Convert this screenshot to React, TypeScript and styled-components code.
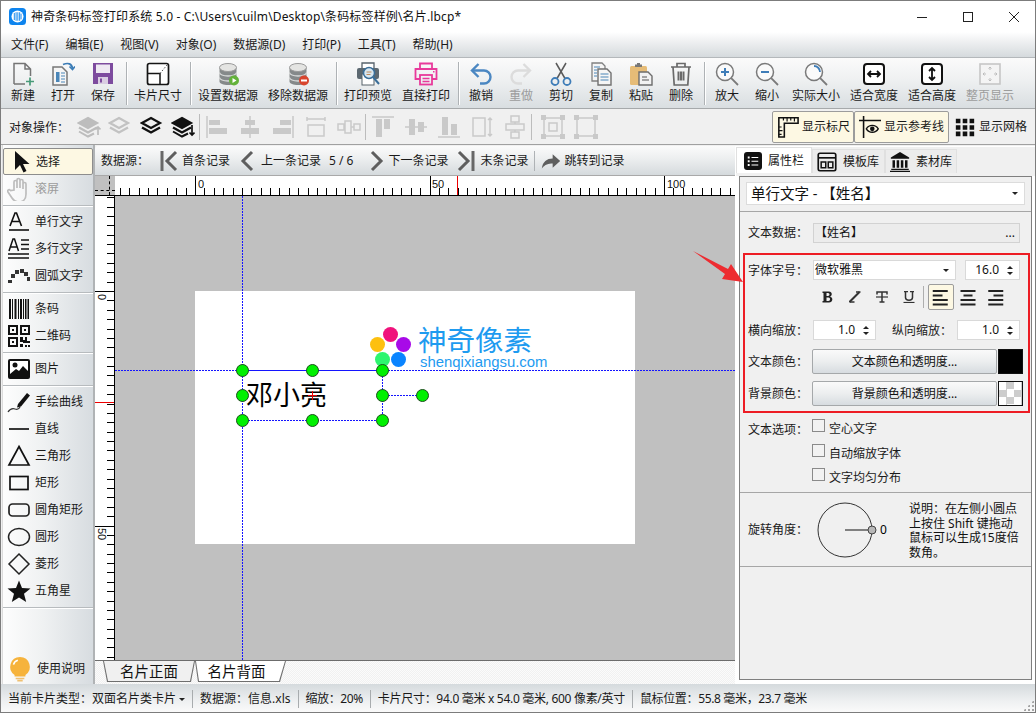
import React from 'react';
import styled, { createGlobalStyle } from 'styled-components';

const FONT = '"Noto Sans", "Noto Sans CJK SC", sans-serif';
const COLON = '\uFF1A';
const COMMA = '\uFF0C';

const GlobalStyle = createGlobalStyle`
  html, body { margin: 0; padding: 0; background: #f0f0f0; overflow: hidden; }
  * { box-sizing: border-box; }
  body { font-family: ${FONT}; font-size: 12px; color: #000; }
`;

const Glyph = styled.svg.attrs<{ $size?: number }>((p) => ({
  viewBox: p.viewBox || '0 0 24 24',
  fill: 'none',
}))<{ $size?: number }>`
  width: ${(p) => p.$size || 24}px;
  height: ${(p) => p.$size || 24}px;
  flex: none;
  display: block;
`;

const Window = styled.div`
  width: 1036px;
  height: 713px;
  border: 1px solid #7c7c7c;
  display: flex;
  flex-direction: column;
  position: relative;
  background: #f0f0f0;
  line-height: 1;
`;

const TitleBar = styled.div`
  height: 31px;
  background: #fff;
  display: flex;
  align-items: center;
  padding-left: 8px;
  flex: none;
`;

const TitleText = styled.span`
  margin-left: 5px;
  font-size: 12px;
  white-space: pre;
  color: #111;
  letter-spacing: 0.15px;
`;

const WinControls = styled.div`
  margin-left: auto;
  display: flex;
  align-items: center;
  padding-right: 15px;
  gap: 34px;
`;

const MenuBar = styled.div`
  height: 26px;
  flex: none;
  display: flex;
  align-items: center;
  padding-left: 10px;
  gap: 17px;
  background: linear-gradient(#ffffff, #f2f3f4 30%, #d5dadd);
  border-bottom: 1px solid #b4b8bb;
`;

const MenuItem = styled.span`
  font-size: 12px;
  color: #1a1a1a;
`;

const Toolbar = styled.div`
  height: 51px;
  flex: none;
  display: flex;
  padding-left: 2px;
  background: linear-gradient(#fbfbfb, #eef0f1 45%, #d9dee1);
  border-bottom: 1px solid #a6a9ab;
`;

const ToolButton = styled.div<{ $w: number; $off?: boolean }>`
  width: ${(p) => p.$w}px;
  display: flex;
  flex-direction: column;
  align-items: center;
  padding-top: 4px;
  gap: 4px;
  font-size: 12px;
  color: ${(p) => (p.$off ? '#9c9c9c' : '#1a1a1a')};
  white-space: nowrap;
`;

const ToolSep = styled.div`
  width: 6px;
  flex: none;
  display: flex;
  justify-content: center;
  padding: 4px 0 3px;
  &::before {
    content: '';
    width: 1px;
    background: #aeb2b5;
    box-shadow: 1px 0 0 #fff;
  }
`;

const ObjectBar = styled.div`
  height: 36px;
  flex: none;
  display: flex;
  align-items: center;
  padding: 1px 0 0 8px;
  background: #f0f0f0;
  border-bottom: 1px solid #a0a0a0;
`;

const ObjectLabel = styled.span`
  width: 64px;
  padding-top: 1px;
  flex: none;
  font-size: 12px;
  color: #1a1a1a;
`;

const ObjectIconSlot = styled.div<{ $w?: number; $ml?: number }>`
  width: ${(p) => p.$w || 33}px;
  margin-left: ${(p) => p.$ml || 0}px;
  display: flex;
  justify-content: center;
  flex: none;
`;

const ObjectSep = styled.div`
  width: 1px;
  height: 26px;
  background: #bcbcbc;
  flex: none;
`;

const ToggleGroup = styled.div`
  margin-left: auto;
  display: flex;
  align-items: center;
  padding-right: 7px;
`;

const Toggle = styled.div<{ $w: number; $on?: boolean }>`
  width: ${(p) => p.$w}px;
  height: 32px;
  display: flex;
  align-items: center;
  gap: 3px;
  padding-left: 4px;
  font-size: 12px;
  color: #1a1a1a;
  white-space: nowrap;
  background: ${(p) => (p.$on ? '#fdf8e3' : 'transparent')};
  border: 1px solid ${(p) => (p.$on ? '#9c9c9c' : 'transparent')};
  border-radius: 2px;
`;

const Body = styled.div`
  flex: 1;
  min-height: 0;
  display: flex;
`;

const Sidebar = styled.div`
  width: 93px;
  flex: none;
  margin-left: 1px;
  padding: 3px 0 2px;
  display: flex;
  flex-direction: column;
  background: linear-gradient(90deg, #fdfdfd, #eff1f2 45%, #d7dce0);
  border-right: 2px solid #b0b3b5;
  border-left: 1px solid #dcdcdc;
`;

const SideItem = styled.div<{ $active?: boolean; $off?: boolean }>`
  height: 27px;
  flex: none;
  display: flex;
  align-items: center;
  gap: 4px;
  padding-left: 4px;
  font-size: 12px;
  white-space: nowrap;
  color: ${(p) => (p.$off ? '#9c9c9c' : '#1a1a1a')};
  background: ${(p) => (p.$active ? '#fdf8e3' : 'transparent')};
  border: ${(p) => (p.$active ? '1px solid #8d8d8d' : 'none')};
  border-radius: ${(p) => (p.$active ? '2px' : '0')};
`;

const SideSep = styled.div`
  height: 1px;
  flex: none;
  margin: 3px 0 2px;
  background: #b7bbbe;
  box-shadow: 0 1px 0 #fff;
`;

const SideSpacer = styled.div`
  flex: 1;
`;

const Center = styled.div`
  width: 640px;
  flex: none;
  display: flex;
  flex-direction: column;
  padding-top: 1px;
`;

const DataBar = styled.div`
  height: 30px;
  flex: none;
  display: flex;
  align-items: center;
  padding: 1px 0 0 6px;
  font-size: 12px;
  color: #1a1a1a;
  white-space: nowrap;
  border-radius: 3px 0 0 0;
  border-bottom: 1px solid #a9a9a9;
  background: linear-gradient(#fbfbfb, #eceeef 45%, #d5dadd);
`;

const DataLabel = styled.span`
  width: 59px;
  flex: none;
`;

const DataItem = styled.div<{ $ml?: number; $gap?: number }>`
  display: flex;
  align-items: center;
  margin-left: ${(p) => p.$ml || 0}px;
  gap: ${(p) => p.$gap || 4}px;
`;

const DataSep = styled.div`
  width: 1px;
  height: 20px;
  background: #aeb2b5;
  margin: 0 6px 0 5px;
`;

const NavSvg = styled.svg<{ $w: number }>`
  width: ${(p) => p.$w}px;
  height: 22px;
  flex: none;
  display: block;
`;

const Workspace = styled.div`
  flex: 1;
  min-height: 0;
  display: grid;
  grid-template-columns: 20px 620px;
  grid-template-rows: 20px 464px;
`;

const RulerCorner = styled.div`
  background: #c0c0c0;
  position: relative;
  border-bottom: 1px solid #000;
  &::before {
    content: '';
    position: absolute;
    left: 14px;
    top: 0;
    height: 100%;
    border-left: 1px dashed #000;
  }
  &::after {
    content: '';
    position: absolute;
    left: 0;
    right: 0;
    top: 14px;
    border-top: 1px dashed #000;
  }
`;

const RulerSvg = styled.svg`
  display: block;
  background: #fff;
`;

const RulerText = styled.text`
  font-family: "Liberation Sans", sans-serif;
  font-size: 11px;
  fill: #111;
`;

const Canvas = styled.div`
  position: relative;
  background: #c0c0c0;
  overflow: hidden;
`;

const Card = styled.div`
  position: absolute;
  left: 80px;
  top: 95px;
  width: 440px;
  height: 253px;
  background: #fff;
`;

const GuideV = styled.div`
  position: absolute;
  left: 127px;
  top: 0;
  bottom: 0;
  width: 1px;
  background: repeating-linear-gradient(#1414ff 0 2px, transparent 2px 3px);
`;

const GuideH = styled.div`
  position: absolute;
  left: 0;
  right: 0;
  top: 174px;
  height: 1px;
  background: repeating-linear-gradient(90deg, #1414ff 0 2px, transparent 2px 3px);
`;

const LogoTitle = styled.div`
  position: absolute;
  left: 303px;
  top: 129px;
  height: 30px;
  font-size: 28.5px;
  color: #1e9bf0;
  white-space: nowrap;
  line-height: 30px;
`;

const LogoSub = styled.div`
  position: absolute;
  left: 305px;
  top: 159px;
  font-family: "Liberation Sans", sans-serif;
  font-size: 14.9px;
  color: #1e9bf0;
  white-space: nowrap;
  line-height: 14px;
`;

const LogoDot = styled.div<{ $x: number; $y: number; $c: string }>`
  position: absolute;
  left: ${(p) => p.$x - 115 - 7.5}px;
  top: ${(p) => p.$y - 196 - 7.5}px;
  width: 15px;
  height: 15px;
  border-radius: 50%;
  background: ${(p) => p.$c};
`;

const NameText = styled.div`
  position: absolute;
  left: 131px;
  top: 180px;
  font-size: 27px;
  line-height: 38px;
  color: #000;
  white-space: nowrap;
`;

const SelectLine = styled.div<{ $x: number; $y: number; $w?: number; $h?: number; $solid?: boolean }>`
  position: absolute;
  left: ${(p) => p.$x - 115}px;
  top: ${(p) => p.$y - 196}px;
  width: ${(p) => p.$w || 1}px;
  height: ${(p) => p.$h || 1}px;
  background: ${(p) =>
    p.$solid
      ? '#1414ff'
      : `repeating-linear-gradient(${p.$h ? '180deg' : '90deg'}, #1414ff 0 2px, transparent 2px 3px)`};
`;

const Handle = styled.div<{ $x: number; $y: number }>`
  position: absolute;
  left: ${(p) => p.$x - 115 - 6.5}px;
  top: ${(p) => p.$y - 196 - 6.5}px;
  width: 13px;
  height: 13px;
  border-radius: 50%;
  background: #00f000;
  border: 1px solid #1d4d1d;
`;

const CrossMark = styled.div`
  position: absolute;
  left: 193px;
  top: 195px;
  width: 9px;
  height: 9px;
  background:
    linear-gradient(#e00, #e00) center / 1px 100% no-repeat,
    linear-gradient(#e00, #e00) center / 100% 1px no-repeat;
`;

const SheetTabs = styled.div`
  height: 24px;
  flex: none;
  display: flex;
  padding-left: 8px;
  border-top: 1px solid #6c6c6c;
  background: repeating-conic-gradient(#f1f1f1 0 25%, #fbfbfb 0 50%) 0 0 / 2px 2px;
`;

const SheetTab = styled.div<{ $active?: boolean; $w: number }>`
  width: ${(p) => p.$w}px;
  height: 21px;
  background: #6f6f6f;
  clip-path: ${(p) =>
    p.$active
      ? 'polygon(0 0, 100% 0, calc(100% - 4px) 100%, 4px 100%)'
      : 'polygon(0 0, 100% 0, calc(100% - 6px) 100%, 3px 100%)'};
  & > span {
    display: flex;
    align-items: center;
    justify-content: center;
    width: 100%;
    height: 100%;
    padding-right: ${(p) => (p.$active ? 0 : 8)}px;
    font-size: 14.5px;
    color: #111;
    background: ${(p) => (p.$active ? '#f0f0f0' : '#fff')};
    clip-path: ${(p) =>
      p.$active
        ? 'polygon(1px 0, calc(100% - 1px) 0, calc(100% - 5px) calc(100% - 1px), 5px calc(100% - 1px))'
        : 'polygon(1px 0, calc(100% - 1px) 0, calc(100% - 7px) calc(100% - 1px), 4px calc(100% - 1px))'};
  }
`;

const Panel = styled.div`
  flex: 1;
  min-width: 0;
  display: flex;
  flex-direction: column;
  padding: 1px 3px 4px 4px;
  background: #fff;
  border-top: 1px solid #f0f0f0;
`;

const PanelTabs = styled.div`
  height: 29px;
  flex: none;
  display: flex;
  align-items: flex-end;
  margin: 0 -3px 0 -3px;
  padding-bottom: 3px;
  background: #f0f0f0;
`;

const PanelTab = styled.div<{ $active?: boolean; $w: number }>`
  width: ${(p) => p.$w}px;
  height: ${(p) => (p.$active ? 26 : 24)}px;
  display: flex;
  align-items: center;
  gap: 6px;
  padding-left: ${(p) => (p.$active ? 7 : 4)}px;
  font-size: 12px;
  color: #1a1a1a;
  background: ${(p) => (p.$active ? '#fff' : '#ececec')};
  border: 1px solid #e0e0e0;
  border-bottom: none;
  white-space: nowrap;
`;

const Frame = styled.div`
  flex: 1;
  min-height: 0;
  display: flex;
  flex-direction: column;
  background: #f0f0f0;
  border: 1px solid #7f7f7f;
`;

const TypeSelect = styled.div`
  height: 23px;
  margin: 5px 6px 6px;
  flex: none;
  background: #fff;
  border: 1px solid #dcdcdc;
  display: flex;
  align-items: center;
  padding-left: 4px;
  font-size: 14.5px;
  color: #111;
  white-space: nowrap;
`;

const Caret = styled.span`
  margin-left: auto;
  margin-right: 6px;
  width: 0;
  height: 0;
  border-left: 3px solid transparent;
  border-right: 3px solid transparent;
  border-top: 3px solid #222;
`;

const Divider = styled.div`
  height: 1px;
  flex: none;
  background: #a6a6a6;
`;

const DataRow = styled.div`
  height: 41px;
  flex: none;
  display: flex;
  align-items: center;
  padding-left: 8px;
`;

const FieldLabel = styled.span<{ $w?: number; $ml?: number }>`
  width: ${(p) => p.$w || 65}px;
  margin-left: ${(p) => p.$ml || 0}px;
  padding-top: 1px;
  flex: none;
  font-size: 12px;
  color: #1a1a1a;
  white-space: nowrap;
`;

const DataField = styled.div`
  width: 207px;
  height: 20px;
  background: #ececec;
  border: 1px solid #d2d2d2;
  display: flex;
  align-items: center;
  font-size: 12px;
  color: #111;
  justify-content: space-between;
  padding: 0 4px 0 1px;
`;

const RedBox = styled.div`
  width: 287px;
  height: 160px;
  flex: none;
  margin-left: 3px;
  border: 2px solid #ed1c24;
  padding: 5px 0 0 3px;
  display: flex;
  flex-direction: column;
`;

const FormRow = styled.div<{ $h: number; $mb?: number }>`
  height: ${(p) => p.$h}px;
  margin-bottom: ${(p) => p.$mb || 0}px;
  flex: none;
  display: flex;
  align-items: center;
`;

const WhiteBox = styled.div<{ $w: number; $ml?: number }>`
  width: ${(p) => p.$w}px;
  height: 20px;
  margin-left: ${(p) => p.$ml || 0}px;
  padding-left: 1px;
  flex: none;
  background: #fff;
  border: 1px solid #d9d9d9;
  display: flex;
  align-items: center;
  font-size: 12px;
  color: #111;
`;

const SpinValue = styled.span`
  margin-left: auto;
  font-size: 12px;
`;

const SpinArrows = styled.span`
  display: flex;
  flex-direction: column;
  gap: 3px;
  margin: 0 6px 0 8px;
  &::before, &::after {
    content: '';
    width: 0;
    height: 0;
    border-left: 3px solid transparent;
    border-right: 3px solid transparent;
  }
  &::before { border-bottom: 3px solid #222; }
  &::after { border-top: 3px solid #222; }
`;

const FormatRow = styled.div`
  height: 26px;
  margin: 4px 0 10px 67px;
  flex: none;
  display: flex;
  align-items: center;
`;

const FormatBtn = styled.div<{ $on?: boolean; $w?: number }>`
  width: ${(p) => p.$w || 26}px;
  height: 26px;
  margin-right: 1px;
  display: flex;
  align-items: center;
  justify-content: center;
  flex: none;
  background: ${(p) => (p.$on ? '#fdf8e3' : 'transparent')};
  border: 1px solid ${(p) => (p.$on ? '#9c9c9c' : 'transparent')};
  border-radius: 2px;
`;

const FormatSep = styled.div`
  width: 1px;
  height: 22px;
  background: #aeaeae;
  margin: 0 4px 0 0;
`;

const ColorButton = styled.div`
  width: 185px;
  height: 25px;
  margin-left: -1px;
  flex: none;
  display: flex;
  align-items: center;
  justify-content: center;
  font-size: 12px;
  color: #111;
  border: 1px solid #a5a8aa;
  border-radius: 2px;
  background: linear-gradient(#fafafa, #eceeef 50%, #d7dce0);
`;

const Swatch = styled.div<{ $check?: boolean }>`
  width: 25px;
  height: 25px;
  margin-left: 1px;
  flex: none;
  border: 1px solid #111;
  background: ${(p) =>
    p.$check
      ? 'repeating-conic-gradient(#cdcdcd 0 25%, #fff 0 50%) 0 0 / 15px 15px'
      : '#000'};
`;

const OptionSection = styled.div`
  height: 79px;
  flex: none;
  padding: 4px 0 0 8px;
`;

const OptionRow = styled.div`
  height: 24.5px;
  display: flex;
  align-items: center;
  font-size: 12px;
  color: #1a1a1a;
`;

const CheckBox = styled.span`
  width: 13px;
  height: 13px;
  flex: none;
  margin: -7px 4px 0 -1px;
  border: 1px solid #8a8a8a;
  background: #f2f2f2;
`;

const RotateSection = styled.div`
  height: 73px;
  flex: none;
  display: flex;
  align-items: center;
  padding-left: 8px;
`;

const DialSvg = styled.svg`
  width: 60px;
  height: 60px;
  flex: none;
`;

const DialValue = styled.span`
  font-size: 12px;
  margin-left: 3px;
  width: 29px;
`;

const Note = styled.div`
  padding-top: 3px;
  font-size: 12px;
  line-height: 14.5px;
  color: #111;
  white-space: nowrap;
`;

const StatusBar = styled.div`
  height: 28px;
  flex: none;
  display: flex;
  align-items: center;
  padding: 2px 0 0 7px;
  font-size: 12px;
  color: #1a1a1a;
  white-space: nowrap;
  background: linear-gradient(#d5dadd, #eef0f1 60%, #fafafa);
  position: relative;
`;

const StatusText = styled.span<{ $tight?: number }>`
  letter-spacing: ${(p) => p.$tight || 0}px;
`;

const StatusSep = styled.div`
  width: 1px;
  height: 18px;
  background: #a8acae;
  margin: 0 7px;
  flex: none;
`;

const StatusCaret = styled.span`
  display: inline-block;
  margin-left: 3px;
  vertical-align: middle;
  border-left: 3px solid transparent;
  border-right: 3px solid transparent;
  border-top: 3px solid #222;
`;

const Grip = styled.div`
  position: absolute;
  right: 1px;
  bottom: 1px;
  width: 11px;
  height: 11px;
  background: radial-gradient(circle, #a5a5a5 0 1px, transparent 1px) 0 0 / 4px 4px;
  clip-path: polygon(100% 0, 100% 100%, 0 100%);
`;

const Callout = styled.svg`
  position: absolute;
  left: 685px;
  top: 244px;
  width: 62px;
  height: 42px;
`;

const AppIcon = () => (
  <Glyph $size={17}>
    <rect x="0" y="0" width="24" height="24" rx="5" fill="#0d84ee" />
    <circle cx="12" cy="12" r="8.5" fill="#fff" />
    <path d="M7.5 7v10M10 6v12M12.5 6v12M15 6v12M17 8v8" stroke="#0d84ee" strokeWidth="1.3" />
  </Glyph>
);

const NewIcon = () => (
  <Glyph>
    <path d="M3 22V1.5h11l5.5 5.5v7M3 22h11M14 1.5V7h5.5" stroke="#757575" strokeWidth="1.5" />
    <path d="M19 15.5v8M15 19.5h8" stroke="#479a78" strokeWidth="1.7" />
  </Glyph>
);

const OpenIcon = () => (
  <Glyph>
    <path d="M2 5h9l5 5v13H2z" fill="#f5f5f5" stroke="#777" strokeWidth="1.5" />
    <rect x="5" y="10" width="3.5" height="10" fill="#4a86b8" />
    <path d="M10 11h4M10 14h4M10 17h4M10 20h4" stroke="#4a86b8" />
    <path d="M12 2.5c5-2 9-1 9.5 4" stroke="#3b7cb6" strokeWidth="1.7" />
    <path d="M18.5 4.5l3 3 2.5-3" stroke="#3b7cb6" strokeWidth="1.7" />
  </Glyph>
);

const SaveIcon = () => (
  <Glyph>
    <rect x="2" y="1" width="20" height="21" fill="#7d4b9e" />
    <rect x="5" y="2.5" width="14" height="8.5" fill="#eee9f2" />
    <rect x="7" y="15" width="10" height="7" fill="#d9cde2" />
    <rect x="9" y="16.5" width="2" height="4" fill="#7d4b9e" />
  </Glyph>
);

const CardSizeIcon = () => (
  <Glyph>
    <rect x="1.5" y="1.5" width="21" height="21" rx="2" fill="#fff" stroke="#151515" strokeWidth="1.7" />
    <path d="M2 11.5h12V22" stroke="#151515" strokeWidth="1.5" />
    <path d="M14 11.5L21 3" stroke="#444" strokeDasharray="1.5 1.8" />
  </Glyph>
);

const DbIcon = ({ remove }: { remove?: boolean }) => (
  <Glyph>
    <path d="M3.5 5.5v14c0 2 3.8 3.5 8.5 3.5s8.5-1.5 8.5-3.5v-14z" fill="#85898a" />
    <path d="M3.5 10.5c0 2 3.8 3.5 8.5 3.5s8.5-1.5 8.5-3.5M3.5 15.5c0 2 3.8 3.5 8.5 3.5s8.5-1.5 8.5-3.5" stroke="#d9dbdb" strokeWidth="1.3" />
    <ellipse cx="12" cy="5.5" rx="8.5" ry="4" fill="#e4e4e2" stroke="#9a9a9a" />
    <circle cx="18" cy="18.5" r="5" fill={remove ? '#d8452e' : '#62b23a'} />
    {remove ? (
      <rect x="15" y="17.5" width="6" height="2" fill="#fff" />
    ) : (
      <path d="M16.5 16l4 2.5-4 2.5z" fill="#fff" />
    )}
  </Glyph>
);

const PreviewIcon = () => (
  <Glyph>
    <path d="M6 1h12v6H6z" fill="#fff" stroke="#56626b" strokeWidth="1.3" />
    <rect x="1" y="6" width="22" height="11" rx="2" fill="#5c6871" />
    <rect x="6" y="12" width="12" height="11" fill="#fff" stroke="#56626b" />
    <circle cx="13" cy="11" r="5.5" fill="#d7e7f1" stroke="#3a6e99" strokeWidth="1.5" />
    <path d="M17 15l6 7" stroke="#3a6e99" strokeWidth="2" />
    <path d="M10.5 10h5M10.5 12.5h4" stroke="#c08a5a" />
  </Glyph>
);

const PrintIcon = () => (
  <Glyph>
    <path d="M6 7V1.5h12V7M6 17H1.5V7h21v10H18" stroke="#e83a9b" strokeWidth="1.8" />
    <rect x="6" y="13" width="12" height="9.5" stroke="#e83a9b" strokeWidth="1.8" />
    <path d="M8.5 16.5h7M8.5 19.5h7" stroke="#e83a9b" strokeWidth="1.3" />
    <path d="M19 9.8h1.5" stroke="#e83a9b" strokeWidth="1.5" />
  </Glyph>
);

const UndoIcon = () => (
  <Glyph>
    <path d="M9.5 2L3 8.5l6.5 6.5" stroke="#4b87c2" strokeWidth="2.4" />
    <path d="M3.5 8.5H15a6.5 6.5 0 0 1 0 13h-4" stroke="#4b87c2" strokeWidth="2.4" />
  </Glyph>
);

const RedoIcon = () => (
  <Glyph>
    <path d="M14.5 2L21 8.5 14.5 15" stroke="#dcdcdc" strokeWidth="2.4" />
    <path d="M20.5 8.5H9a6.5 6.5 0 0 0 0 13h4" stroke="#dcdcdc" strokeWidth="2.4" />
  </Glyph>
);

const CutIcon = () => (
  <Glyph>
    <path d="M8 16.5L17 1M16 16.5L7 1" stroke="#5a5a5a" strokeWidth="1.5" />
    <circle cx="6" cy="19.5" r="3.5" stroke="#3f7db8" strokeWidth="1.8" />
    <circle cx="18" cy="19.5" r="3.5" stroke="#3f7db8" strokeWidth="1.8" />
  </Glyph>
);

const CopyIcon = () => (
  <Glyph>
    <path d="M3 1h10l3 3v15H3z" fill="#f5f5f5" stroke="#808080" strokeWidth="1.3" />
    <path d="M5 5h6M5 8h3M5 11h3M5 14h3" stroke="#4a86b8" />
    <path d="M9 7h9l4 4v12H9z" fill="#f5f5f5" stroke="#707070" strokeWidth="1.4" />
    <path d="M11.5 12h8M11.5 15h8M11.5 18h8" stroke="#4a86b8" strokeWidth="1.2" />
  </Glyph>
);

const PasteIcon = () => (
  <Glyph>
    <rect x="1" y="4" width="17" height="19" rx="1.5" fill="#e6bc77" />
    <path d="M6 5V2.5h2V1h3v1.5h2V5z" fill="#777" />
    <path d="M10 10h9l4 4v9H10z" fill="#f2f2f2" stroke="#6d6d6d" strokeWidth="1.4" />
    <path d="M13 15h5M13 18h7" stroke="#555" />
  </Glyph>
);

const TrashIcon = () => (
  <Glyph>
    <path d="M2 5h20M8 5V1.5h8V5M4 5l1.2 18h13.6L20 5" stroke="#6a6a6a" strokeWidth="1.7" />
    <path d="M8.5 9.5h2v9h-2zM11 9.5h2v9h-2zM13.5 9.5h2v9h-2z" fill="#6a6a6a" />
  </Glyph>
);

const ZoomIcon = ({ mode }: { mode: 'in' | 'out' | 'actual' }) => (
  <Glyph>
    <circle cx="10" cy="10" r="8.5" fill="#fafafa" stroke="#7a7a7a" strokeWidth="1.5" />
    <path d="M16.2 16.2L23 23" stroke="#7a7a7a" strokeWidth="1.8" />
    {mode === 'actual' ? (
      <path d="M10 4a6 6 0 0 1 6 6" stroke="#3f7db8" strokeWidth="1.8" />
    ) : (
      <path d={mode === 'in' ? 'M6 10h8M10 6v8' : 'M6 10h8'} stroke="#3f7db8" strokeWidth="2" />
    )}
  </Glyph>
);

const FitIcon = ({ vertical }: { vertical?: boolean }) => (
  <Glyph>
    <rect x="2" y="2" width="20" height="20" rx="3" fill="#fff" stroke="#111" strokeWidth="2" />
    <path
      d={vertical ? 'M12 6v12M9 9l3-3 3 3M9 15l3 3 3-3' : 'M6 12h12M9 9l-3 3 3 3M15 9l3 3-3 3'}
      stroke="#111"
      strokeWidth="1.8"
    />
  </Glyph>
);

const FitPageIcon = () => (
  <Glyph>
    <rect x="2" y="2" width="20" height="20" fill="#f4f4f4" stroke="#c6c6c6" strokeWidth="1.6" />
    <path d="M12 5v3M10.5 6.5L12 5l1.5 1.5M12 19v-3M10.5 17.5L12 19l1.5-1.5M5 12h3M6.5 10.5L5 12l1.5 1.5M19 12h-3M17.5 10.5L19 12l-1.5 1.5" stroke="#bdbdbd" />
  </Glyph>
);

const LayerIcon = ({ color, arrow }: { color: string; arrow?: 'up' | 'down' }) => (
  <Glyph>
    <path d="M11 3l9 5-9 5-9-5z" stroke={color} strokeWidth="2.2" fill={arrow ? color : 'none'} />
    <path d="M2 12.5l9 5 9-5" stroke={color} strokeWidth="2.4" />
    {arrow && <path d="M2 16.5l9 5 6-3" stroke={color} strokeWidth="2" />}
    {arrow === 'up' && <path d="M21 20v-8M18.5 14.5L21 12l2.5 2.5" stroke={color} strokeWidth="1.7" />}
    {arrow === 'down' && <path d="M21 10v10M18.5 17.5L21 20l2.5-2.5" stroke={color} strokeWidth="1.7" />}
  </Glyph>
);

const ALIGN = '#c9c9c9';

const AlignIcon = ({ d, fill }: { d: string; fill: string }) => (
  <Glyph>
    <path d={d} stroke={ALIGN} strokeWidth="1.5" />
    <path d={fill} fill={ALIGN} />
  </Glyph>
);

const alignShapes = [
  { d: 'M2 1v22', fill: 'M4 5h11v5H4zM4 13h18v6H4z' },
  { d: 'M12 1v22', fill: 'M7 5h10v5H7zM3 13h18v6H3z' },
  { d: 'M22 1v22', fill: 'M9 5h11v5H9zM2 13h18v6H2z' },
  { d: 'M3 4h18M3 2v4M21 2v4M4 10h16v11H4z', fill: '' },
  { d: 'M1 9h6v6H1zM8 6h6v12H8zM17 9h6v6h-6zM7 12h1M14 12h3', fill: '' },
];

const alignShapes2 = [
  { d: 'M1 2h22', fill: 'M5 4h6v18H5zM13 4h6v10h-6z' },
  { d: 'M1 12h22', fill: 'M5 4h6v16H5zM14 7h6v10h-6z' },
  { d: 'M1 22h22', fill: 'M5 2h6v18H5zM14 9h6v11h-6z' },
  { d: 'M3 3h12v18H3zM20 3v18M18 5l2-2 2 2M18 19l2 2 2-2', fill: '' },
  { d: 'M8 1h8v6H8zM3 9h18v6H3zM8 17h8v6H8zM12 7v2M12 15v2', fill: '' },
];

const SnapIcon = ({ inner }: { inner?: boolean }) => (
  <Glyph>
    <path d="M3 3h18v18H3z" stroke={ALIGN} strokeWidth="1.5" />
    <path d="M0 0h5v5H0zM19 0h5v5h-5zM0 19h5v5H0zM19 19h5v5h-5z" fill={ALIGN} />
    {inner && <path d="M8 8h8v8H8z" stroke={ALIGN} strokeWidth="1.5" />}
  </Glyph>
);

const RulerToggleIcon = () => (
  <Glyph $size={22}>
    <path d="M2 2h21v6H8v15H2z" stroke="#111" strokeWidth="1.7" />
    <path d="M7 2v3M11 2v4M15 2v3M19 2v4M2 12h3M2 16h4M2 20h3" stroke="#111" strokeWidth="1.3" />
  </Glyph>
);

const GuideToggleIcon = () => (
  <Glyph $size={22}>
    <path d="M5 0v24M0 5h24" stroke="#111" strokeWidth="1.7" />
    <path d="M8 14c3-5 10-5 13 0-3 5-10 5-13 0z" stroke="#111" strokeWidth="1.5" />
    <circle cx="14.5" cy="14" r="2.5" fill="#111" />
  </Glyph>
);

const GridIcon = () => (
  <Glyph $size={22}>
    <path d="M2 3h5v5H2zM9.5 3h5v5h-5zM17 3h5v5h-5zM2 10h5v5H2zM9.5 10h5v5h-5zM17 10h5v5h-5zM2 17h5v5H2zM9.5 17h5v5h-5zM17 17h5v5h-5z" fill="#111" />
  </Glyph>
);

const ArrowIcon = () => (
  <Glyph>
    <path d="M7 1v19l5-5 3.5 7.5 3-1.5L15 14h6.5z" fill="#111" />
  </Glyph>
);

const HandIcon = () => (
  <Glyph>
    <path d="M7 13V5a1.5 1.5 0 0 1 3 0v6-8a1.5 1.5 0 0 1 3 0v8-7a1.5 1.5 0 0 1 3 0v8-5a1.5 1.5 0 0 1 3 0v10c0 5-3 8-7 8-3 0-5-1-7-4l-4-6c-1-2 1-3 2.5-1.5z" stroke="#bdbdbd" strokeWidth="1.7" />
  </Glyph>
);

const SingleTextIcon = () => (
  <Glyph>
    <path d="M3 16L8 3h1.5l5 13M5 11.5h7.5" stroke="#111" strokeWidth="1.6" />
    <path d="M2 20h20" stroke="#111" strokeWidth="1.6" />
  </Glyph>
);

const MultiTextIcon = () => (
  <Glyph>
    <path d="M2 14L6 2h1.5l4 12M3.5 10h6.5" stroke="#111" strokeWidth="1.5" />
    <path d="M14 3h8M14 7.5h8M14 12h8M1 17h21M1 21h21" stroke="#111" strokeWidth="1.5" />
  </Glyph>
);

const ArcTextIcon = () => (
  <Glyph>
    <path d="M1 19h4v-3H1zM4 14h4v-4H4zM8 10h4V6H8zM13 9h4V5h-4zM17 12h4V8h-4zM20 17h3v-4h-3z" fill="#333" />
  </Glyph>
);

const BarcodeIcon = () => (
  <Glyph>
    <path d="M2 2h2v20H2zM5 2h1v20H5zM7.5 2h2v20h-2zM11 2h1v20h-1zM13 2h2v20h-2zM16 2h1v20h-1zM18 2h1.5v20H18zM20.5 2H22v20h-1.5z" fill="#111" />
  </Glyph>
);

const QrIcon = () => (
  <Glyph>
    <path fillRule="evenodd" d="M1 1h10v10H1zM3 3v6h6V3zM5 5h2v2H5zM13 1h10v10H13zM15 3v6h6V3zM17 5h2v2h-2zM1 13h10v10H1zM3 15v6h6v-6zM5 17h2v2H5zM13 13h3v3h2v-3h2v4h3v2h-7v-1h-3zM13 20h3v3h-3zM18 21h2v2h-2zM21 21h2v2h-2z" fill="#111" />
  </Glyph>
);

const PictureIcon = () => (
  <Glyph>
    <rect x="1" y="2" width="22" height="20" rx="2" fill="#111" />
    <rect x="3" y="4" width="18" height="13" fill="#fff" />
    <circle cx="8" cy="8" r="2.5" fill="#111" />
    <path d="M3 17l6-5 3 2 4-5 5 5v3z" fill="#111" />
  </Glyph>
);

const PenIcon = () => (
  <Glyph>
    <path d="M11 14l9-11 3 2.5-9 11-4 1z" fill="#111" />
    <path d="M1 22c2-3 4-4 7-3s4 0 5-2" stroke="#333" strokeWidth="1.3" />
  </Glyph>
);

const LineIcon = () => (
  <Glyph>
    <path d="M2 12h20" stroke="#222" strokeWidth="1.8" />
  </Glyph>
);

const ShapeIcon = ({ kind }: { kind: 'tri' | 'rect' | 'round' | 'oval' | 'diamond' }) => (
  <Glyph>
    {kind === 'tri' && <path d="M12 2.5L22 21H2z" stroke="#111" strokeWidth="1.7" />}
    {kind === 'rect' && <rect x="3" y="5.5" width="18" height="13" stroke="#111" strokeWidth="1.7" />}
    {kind === 'round' && <rect x="2" y="6" width="20" height="12" rx="3.5" stroke="#222" strokeWidth="1.7" />}
    {kind === 'oval' && <ellipse cx="12" cy="12" rx="10.5" ry="8.5" stroke="#222" strokeWidth="1.5" />}
    {kind === 'diamond' && <path d="M12 2l10 10-10 10L2 12z" stroke="#222" strokeWidth="1.5" />}
  </Glyph>
);

const StarIcon = () => (
  <Glyph>
    <path d="M12 1.5l3 7.5 8.5.6-6.5 5.2 2.2 8.2L12 18.5 4.8 23 7 14.800.5 9.600 9 9z" fill="#111" />
  </Glyph>
);

const BulbIcon = () => (
  <Glyph $size={26}>
    <path d="M12 1a9 9 0 0 0-5 16.5V19h10v-1.5A9 9 0 0 0 12 1z" fill="#f6b33c" />
    <path d="M8 20h8v1.5H8zM9.5 22h5v1.5h-5z" fill="#f0c070" />
    <path d="M6 8c.5-2 2-3.5 4-4" stroke="#fff" strokeWidth="1.5" />
  </Glyph>
);

const NavIcon = ({ d, bar, w = 18 }: { d: string; bar?: string; w?: number }) => (
  <NavSvg $w={w} viewBox={`0 0 ${w} 22`} fill="none">
    {bar && <path d={bar} stroke="#686868" strokeWidth="3" />}
    <path d={d} stroke="#5e5e5e" strokeWidth="3" />
  </NavSvg>
);

const JumpIcon = () => (
  <Glyph $size={20}>
    <path d="M1 21c1-8 6-12 13-12V4l9 8-9 8v-5c-5 0-9 1-13 6z" fill="#5f5f5f" />
  </Glyph>
);

const ListTabIcon = () => (
  <Glyph $size={18}>
    <rect x="0" y="0" width="24" height="24" rx="4" fill="#111" />
    <path d="M5 6h2.5v2.5H5zM5 11h2.5v2.5H5zM5 16h2.5v2.5H5zM10 6.5h9V8h-9zM10 11.5h9V13h-9zM10 16.5h9V18h-9z" fill="#fff" />
  </Glyph>
);

const TemplateIcon = () => (
  <Glyph $size={20}>
    <rect x="1.5" y="1.5" width="21" height="21" rx="2" stroke="#111" strokeWidth="2" />
    <path d="M1.5 7h21" stroke="#111" strokeWidth="2" />
    <path d="M5 12h5.5v7H5zM13.5 12H19v7h-5.5z" stroke="#111" strokeWidth="1.8" />
  </Glyph>
);

const BankIcon = () => (
  <Glyph $size={20}>
    <path d="M12 0l11 6.5V8H1V6.5z" fill="#111" />
    <path d="M3 10h3v9H3zM8 10h3v9H8zM13 10h3v9h-3zM18 10h3v9h-3zM1.5 20h21v1.5h-21zM0 22.5h24V24H0z" fill="#111" />
  </Glyph>
);

const BoldIcon = () => (
  <Glyph $size={12}>
    <path d="M1 1h13c7 0 7 9 2 10.5 7 1 6 11.5-2 11.5H1v-3h2V4H1zM9 4v6h3c4 0 4-6 0-6zM9 13v7h4c4 0 4-7 0-7z" fill="#222" fillRule="evenodd" />
  </Glyph>
);

const ItalicIcon = () => (
  <Glyph $size={12}>
    <path d="M1 22L21 2" stroke="#333" strokeWidth="4" />
    <path d="M1 22h10" stroke="#333" strokeWidth="3" />
    <path d="M14 2h9" stroke="#333" strokeWidth="3" />
  </Glyph>
);

const StrikeIcon = () => (
  <Glyph $size={12}>
    <path d="M2 7V2h20v5M12 2v20M7 22h10" stroke="#333" strokeWidth="3" />
    <path d="M0 12h24" stroke="#333" strokeWidth="2.4" />
  </Glyph>
);

const UnderIcon = () => (
  <Glyph $size={12}>
    <path d="M2 1h8M14 1h8M5 1v12c0 7 14 7 14 0V1" stroke="#333" strokeWidth="3" />
    <path d="M1 23h22" stroke="#333" strokeWidth="2.4" />
  </Glyph>
);

const TextAlignIcon = ({ d }: { d: string }) => (
  <Glyph $size={18}>
    <path d={d} stroke="#222" strokeWidth="2.4" />
  </Glyph>
);

const Dial = () => (
  <DialSvg viewBox="0 0 60 60">
    <circle cx="28" cy="30" r="27" fill="none" stroke="#333" strokeWidth="1" />
    <path d="M28 30h26" stroke="#111" strokeWidth="1" />
    <circle cx="55" cy="30" r="4" fill="#b8b8b8" stroke="#444" strokeWidth="1" />
  </DialSvg>
);

const TopRuler = () => {
  const ticks: React.ReactNode[] = [];
  for (let k = -8; k <= 58; k++) {
    const x = Math.round(80 + k * 9.38) + 0.5;
    const tall = k % 25 === 0;
    ticks.push(<path key={k} d={`M${x} ${tall ? 0 : 12}V19`} stroke="#000" />);
  }
  return (
    <RulerSvg width="620" height="20">
      {ticks}
      <path d="M342.5 0V19" stroke="#e00" />
      <path d="M0 19.5H620" stroke="#000" />
      <RulerText x="83" y="12">0</RulerText>
      <RulerText x="317" y="12">50</RulerText>
      <RulerText x="552" y="12">100</RulerText>
    </RulerSvg>
  );
};

const LeftRuler = () => {
  const ticks: React.ReactNode[] = [];
  for (let k = -10; k <= 39; k++) {
    const y = Math.round(95 + k * 9.38) + 0.5;
    const tall = k % 25 === 0;
    ticks.push(<path key={k} d={`M${tall ? 0 : 12} ${y}H19`} stroke="#000" />);
  }
  return (
    <RulerSvg width="20" height="464">
      {ticks}
      <path d="M0 206.5H19" stroke="#e00" />
      <path d="M19.5 0V464" stroke="#000" />
      <RulerText transform="translate(3 98) rotate(90)">0</RulerText>
      <RulerText transform="translate(3 332) rotate(90)">50</RulerText>
    </RulerSvg>
  );
};

const menus = ['文件(F)', '编辑(E)', '视图(V)', '对象(O)', '数据源(D)', '打印(P)', '工具(T)', '帮助(H)'];

type Tool = { label: string; icon: React.ReactNode; w: number; off?: boolean };

const toolGroups: Tool[][] = [
  [
    { label: '新建', icon: <NewIcon />, w: 40 },
    { label: '打开', icon: <OpenIcon />, w: 40 },
    { label: '保存', icon: <SaveIcon />, w: 40 },
  ],
  [{ label: '卡片尺寸', icon: <CardSizeIcon />, w: 58 }],
  [
    { label: '设置数据源', icon: <DbIcon />, w: 70 },
    { label: '移除数据源', icon: <DbIcon remove />, w: 70 },
  ],
  [
    { label: '打印预览', icon: <PreviewIcon />, w: 58 },
    { label: '直接打印', icon: <PrintIcon />, w: 58 },
  ],
  [
    { label: '撤销', icon: <UndoIcon />, w: 40 },
    { label: '重做', icon: <RedoIcon />, w: 40, off: true },
    { label: '剪切', icon: <CutIcon />, w: 40 },
    { label: '复制', icon: <CopyIcon />, w: 40 },
    { label: '粘贴', icon: <PasteIcon />, w: 40 },
    { label: '删除', icon: <TrashIcon />, w: 40 },
  ],
  [
    { label: '放大', icon: <ZoomIcon mode="in" />, w: 40 },
    { label: '缩小', icon: <ZoomIcon mode="out" />, w: 40 },
    { label: '实际大小', icon: <ZoomIcon mode="actual" />, w: 58 },
    { label: '适合宽度', icon: <FitIcon />, w: 58 },
    { label: '适合高度', icon: <FitIcon vertical />, w: 58 },
    { label: '整页显示', icon: <FitPageIcon />, w: 58, off: true },
  ],
];

type Side = { label: string; icon: React.ReactNode; active?: boolean; off?: boolean };

const sideGroups: Side[][] = [
  [
    { label: '选择', icon: <ArrowIcon />, active: true },
    { label: '滚屏', icon: <HandIcon />, off: true },
  ],
  [
    { label: '单行文字', icon: <SingleTextIcon /> },
    { label: '多行文字', icon: <MultiTextIcon /> },
    { label: '圆弧文字', icon: <ArcTextIcon /> },
  ],
  [
    { label: '条码', icon: <BarcodeIcon /> },
    { label: '二维码', icon: <QrIcon /> },
  ],
  [{ label: '图片', icon: <PictureIcon /> }],
  [
    { label: '手绘曲线', icon: <PenIcon /> },
    { label: '直线', icon: <LineIcon /> },
    { label: '三角形', icon: <ShapeIcon kind="tri" /> },
    { label: '矩形', icon: <ShapeIcon kind="rect" /> },
    { label: '圆角矩形', icon: <ShapeIcon kind="round" /> },
    { label: '圆形', icon: <ShapeIcon kind="oval" /> },
    { label: '菱形', icon: <ShapeIcon kind="diamond" /> },
    { label: '五角星', icon: <StarIcon /> },
  ],
];

const handles = [
  [242, 370], [312, 370], [382, 370],
  [242, 395], [382, 395], [422, 395],
  [242, 420], [312, 420], [382, 420],
];

const logoDots = [
  { x: 390, y: 334, c: '#f0127c' },
  { x: 403, y: 344, c: '#a80ae8' },
  { x: 377, y: 344, c: '#fdc00f' },
  { x: 382, y: 359, c: '#2ef56f' },
  { x: 398, y: 359, c: '#0a84ff' },
];

const Spin = ({ w, value, ml }: { w: number; value: string; ml?: number }) => (
  <WhiteBox $w={w} $ml={ml}>
    <SpinValue>{value}</SpinValue>
    <SpinArrows />
  </WhiteBox>
);

export default function App() {
  return (
    <>
      <GlobalStyle />
      <Window>
        <TitleBar>
          <AppIcon />
          <TitleText>神奇条码标签打印系统 5.0 - C:\Users\cuilm\Desktop\条码标签样例\名片.lbcp*</TitleText>
          <WinControls>
            <svg width="12" height="12" viewBox="0 0 12 12"><path d="M1 6.5h10" stroke="#222" /></svg>
            <svg width="12" height="12" viewBox="0 0 12 12"><rect x="1.5" y="1.5" width="9" height="9" fill="none" stroke="#222" /></svg>
            <svg width="12" height="12" viewBox="0 0 12 12"><path d="M1 1l10 10M11 1L1 11" stroke="#222" /></svg>
          </WinControls>
        </TitleBar>

        <MenuBar>
          {menus.map((m) => (
            <MenuItem key={m}>{m}</MenuItem>
          ))}
        </MenuBar>

        <Toolbar>
          {toolGroups.map((group, i) => (
            <React.Fragment key={i}>
              {i > 0 && <ToolSep />}
              {group.map((t) => (
                <ToolButton key={t.label} $w={t.w} $off={t.off}>
                  {t.icon}
                  {t.label}
                </ToolButton>
              ))}
            </React.Fragment>
          ))}
        </Toolbar>

        <ObjectBar>
          <ObjectLabel>对象操作{COLON}</ObjectLabel>
          <ObjectIconSlot $w={31.5}><LayerIcon color="#bdbdbd" arrow="up" /></ObjectIconSlot>
          <ObjectIconSlot $w={31.5}><LayerIcon color="#c2c2c2" /></ObjectIconSlot>
          <ObjectIconSlot $w={31.5}><LayerIcon color="#111" /></ObjectIconSlot>
          <ObjectIconSlot $w={31.5}><LayerIcon color="#111" arrow="down" /></ObjectIconSlot>
          <ObjectSep />
          {alignShapes.map((s, i) => (
            <ObjectIconSlot key={i}><AlignIcon d={s.d} fill={s.fill} /></ObjectIconSlot>
          ))}
          <ObjectSep />
          {alignShapes2.map((s, i) => (
            <ObjectIconSlot key={i}><AlignIcon d={s.d} fill={s.fill} /></ObjectIconSlot>
          ))}
          <ObjectSep />
          <ObjectIconSlot $ml={4}><SnapIcon inner /></ObjectIconSlot>
          <ObjectIconSlot><SnapIcon /></ObjectIconSlot>
          <ToggleGroup>
            <Toggle $w={82} $on><RulerToggleIcon />显示标尺</Toggle>
            <Toggle $w={95} $on><GuideToggleIcon />显示参考线</Toggle>
            <Toggle $w={79}><GridIcon />显示网格</Toggle>
          </ToggleGroup>
        </ObjectBar>

        <Body>
          <Sidebar>
            {sideGroups.map((group, i) => (
              <React.Fragment key={i}>
                {group.map((s) => (
                  <SideItem key={s.label} $active={s.active} $off={s.off}>
                    {s.icon}
                    {s.label}
                  </SideItem>
                ))}
                <SideSep />
              </React.Fragment>
            ))}
            <SideSpacer />
            <SideItem><BulbIcon />使用说明</SideItem>
          </Sidebar>

          <Center>
            <DataBar>
              <DataLabel>数据源{COLON}</DataLabel>
              <DataItem>
                <NavIcon bar="M2 1v20" d="M16 2L7 11l9 9" />首条记录
              </DataItem>
              <DataItem $ml={10} $gap={7}>
                <NavIcon w={14} d="M12 2L3 11l9 9" />上一条记录
              </DataItem>
              <DataItem $ml={8}>5 / 6</DataItem>
              <DataItem $ml={15} $gap={2}>
                <NavIcon d="M4 2l9 9-9 9" />下一条记录
              </DataItem>
              <DataItem $ml={9} $gap={5}>
                <NavIcon bar="M16 1v20" d="M2 2l9 9-9 9" />末条记录
              </DataItem>
              <DataSep />
              <DataItem>
                <JumpIcon />跳转到记录
              </DataItem>
            </DataBar>

            <Workspace>
              <RulerCorner />
              <TopRuler />
              <LeftRuler />
              <Canvas>
                <Card />
                {logoDots.map((d) => (
                  <LogoDot key={d.c} $x={d.x} $y={d.y} $c={d.c} />
                ))}
                <LogoTitle>神奇像素</LogoTitle>
                <LogoSub>shenqixiangsu.com</LogoSub>
                <GuideV />
                <GuideH />
                <NameText>邓小亮</NameText>
                <CrossMark />
                <SelectLine $x={242} $y={370} $w={140} $solid />
                <SelectLine $x={382} $y={370} $h={50} />
                <SelectLine $x={242} $y={420} $w={140} />
                <SelectLine $x={382} $y={395} $w={40} />
                {handles.map(([x, y]) => (
                  <Handle key={`${x}-${y}`} $x={x} $y={y} />
                ))}
              </Canvas>
            </Workspace>

            <SheetTabs>
              <SheetTab $active $w={92}><span>名片正面</span></SheetTab>
              <SheetTab $w={91}><span>名片背面</span></SheetTab>
            </SheetTabs>
          </Center>

          <Panel>
            <PanelTabs>
              <PanelTab $active $w={76}><ListTabIcon />属性栏</PanelTab>
              <PanelTab $w={73}><TemplateIcon />模板库</PanelTab>
              <PanelTab $w={72}><BankIcon />素材库</PanelTab>
            </PanelTabs>
            <Frame>
              <TypeSelect>单行文字 - 【姓名】<Caret /></TypeSelect>
              <Divider />
              <DataRow>
                <FieldLabel>文本数据{COLON}</FieldLabel>
                <DataField><span>【姓名】</span><span>...</span></DataField>
              </DataRow>
              <RedBox>
                <FormRow $h={20}>
                  <FieldLabel>字体字号{COLON}</FieldLabel>
                  <WhiteBox $w={143}>微软雅黑<Caret /></WhiteBox>
                  <Spin w={55} ml={9} value="16.0" />
                </FormRow>
                <FormatRow>
                  <FormatBtn><BoldIcon /></FormatBtn>
                  <FormatBtn><ItalicIcon /></FormatBtn>
                  <FormatBtn><StrikeIcon /></FormatBtn>
                  <FormatBtn><UnderIcon /></FormatBtn>
                  <FormatSep />
                  <FormatBtn $on><TextAlignIcon d="M1 4h20M1 10h13M1 16h20M1 22h20" /></FormatBtn>
                  <FormatBtn><TextAlignIcon d="M2 4h20M6 10h12M2 16h20M2 22h20" /></FormatBtn>
                  <FormatBtn><TextAlignIcon d="M3 4h20M10 10h13M3 16h20M3 22h20" /></FormatBtn>
                </FormatRow>
                <FormRow $h={20} $mb={9}>
                  <FieldLabel>横向缩放{COLON}</FieldLabel>
                  <Spin w={63} value="1.0" />
                  <FieldLabel $ml={16}>纵向缩放{COLON}</FieldLabel>
                  <Spin w={63} value="1.0" />
                </FormRow>
                <FormRow $h={25} $mb={7}>
                  <FieldLabel>文本颜色{COLON}</FieldLabel>
                  <ColorButton>文本颜色和透明度...</ColorButton>
                  <Swatch />
                </FormRow>
                <FormRow $h={25}>
                  <FieldLabel>背景颜色{COLON}</FieldLabel>
                  <ColorButton>背景颜色和透明度...</ColorButton>
                  <Swatch $check />
                </FormRow>
              </RedBox>
              <OptionSection>
                <OptionRow>
                  <FieldLabel>文本选项{COLON}</FieldLabel><CheckBox />空心文字
                </OptionRow>
                <OptionRow>
                  <FieldLabel /><CheckBox />自动缩放字体
                </OptionRow>
                <OptionRow>
                  <FieldLabel /><CheckBox />文字均匀分布
                </OptionRow>
              </OptionSection>
              <Divider />
              <RotateSection>
                <FieldLabel $w={69}>旋转角度{COLON}</FieldLabel>
                <Dial />
                <DialValue>0</DialValue>
                <Note>
                  说明{COLON}在左侧小圆点<br />
                  上按住 Shift 键拖动<br />
                  鼠标可以生成15度倍<br />
                  数角。
                </Note>
              </RotateSection>
              <Divider />
            </Frame>
          </Panel>
        </Body>

        <StatusBar>
          <span>当前卡片类型{COLON}双面名片类卡片<StatusCaret /></span>
          <StatusSep />
          <span>数据源{COLON}信息.xls</span>
          <StatusSep />
          <StatusText $tight={-0.4}>缩放{COLON}20%</StatusText>
          <StatusSep />
          <StatusText $tight={-0.3}>卡片尺寸{COLON}94.0 毫米 x 54.0 毫米, 600 像素/英寸</StatusText>
          <StatusSep />
          <StatusText $tight={-0.35}>鼠标位置{COLON}55.8 毫米{COMMA}23.7 毫米</StatusText>
          <Grip />
        </StatusBar>

        <Callout viewBox="0 0 62 42">
          <path d="M7 6L42 24L45 19L57 37L36 34L39 29z" fill="#ed2b30" />
        </Callout>
      </Window>
    </>
  );
}
